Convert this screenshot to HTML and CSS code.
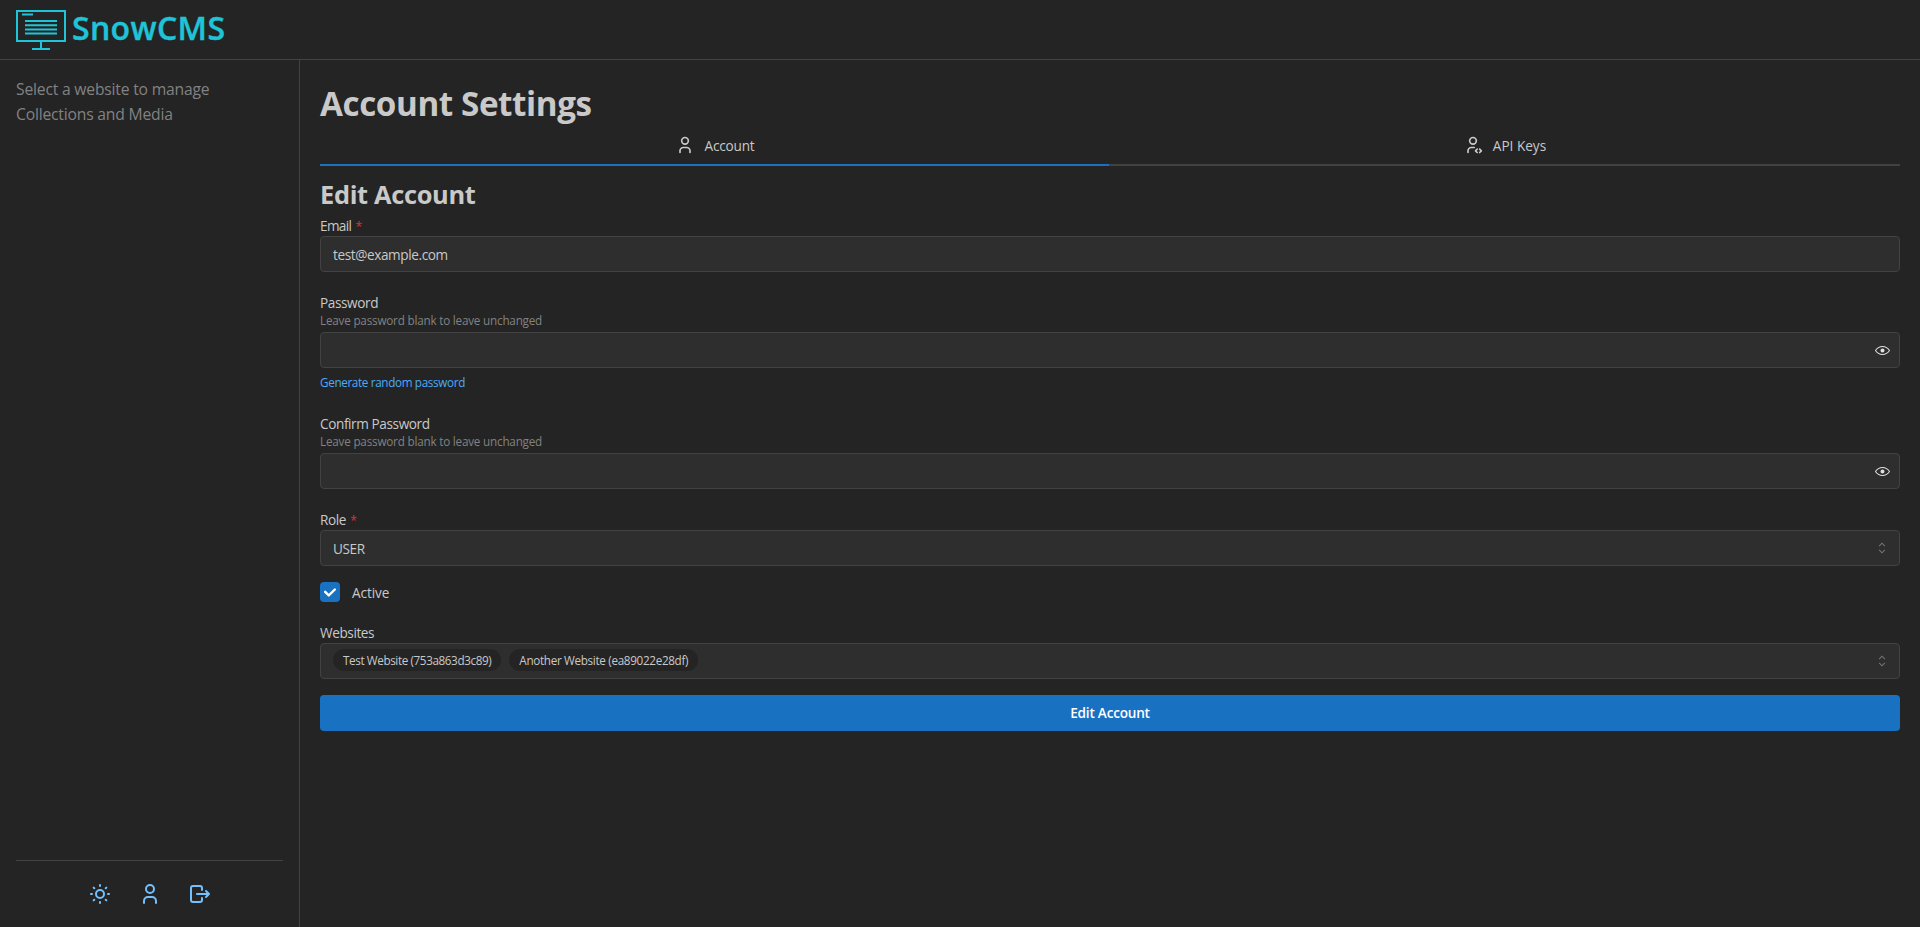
FILE: index.html
```
<!DOCTYPE html>
<html lang="en">
<head>
<meta charset="utf-8">
<title>SnowCMS</title>
<link rel="stylesheet" href="styles.css">
</head>
<body>
<header class="header">
  <svg class="logo-mark" width="50" height="41" viewBox="0 0 50 41" fill="none" stroke="currentColor">
    <rect x="1" y="1" width="48" height="30" stroke-width="2"/>
    <path d="M6 4.500h11M25 32v6M16 39h18M9 11h32M9 15.200h32M9 19.400h32M9 23.600h32" stroke-width="2"/>
  </svg>
  <span class="logo-text">SnowCMS</span>
</header>
<div class="shell">
  <aside class="sidebar">
    <p class="hint">Select a website to manage<br>Collections and Media</p>
    <nav class="actions">
      <svg class="icon" width="24" height="24" viewBox="0 0 24 24"><path d="M8 12a4 4 0 1 0 8 0a4 4 0 1 0 -8 0M3 12h1m8 -9v1m8 8h1m-9 8v1m-6.400 -15.400l.7 .7m12.100 -.7l-.7 .7m0 11.400l.7 .7m-12.100 -.7l-.7 .7"/></svg>
      <svg class="icon" width="24" height="24" viewBox="0 0 24 24"><path d="M8 7a4 4 0 1 0 8 0a4 4 0 0 0 -8 0M6 21v-2a4 4 0 0 1 4 -4h4a4 4 0 0 1 4 4v2"/></svg>
      <svg class="icon" width="24" height="24" viewBox="0 0 24 24"><path d="M14 8v-2a2 2 0 0 0 -2 -2h-7a2 2 0 0 0 -2 2v12a2 2 0 0 0 2 2h7a2 2 0 0 0 2 -2v-2M9 12h12l-3 -3M18 15l3 -3"/></svg>
    </nav>
  </aside>
  <main class="main">
    <h1 class="title">Account Settings</h1>
    <div class="tabs">
      <div class="tab tab-active">
        <svg class="icon" width="20" height="20" viewBox="0 0 24 24"><path d="M8 7a4 4 0 1 0 8 0a4 4 0 0 0 -8 0M6 21v-2a4 4 0 0 1 4 -4h4a4 4 0 0 1 4 4v2"/></svg>
        <span class="tab-text">Account</span>
      </div>
      <div class="tab">
        <svg class="icon" width="20" height="20" viewBox="0 0 24 24"><path d="M8 7a4 4 0 1 0 8 0a4 4 0 0 0 -8 0M6 21v-2a4 4 0 0 1 4 -4h3.500M20 21l2 -2l-2 -2M17 17l-2 2l2 2"/></svg>
        <span class="tab-text tab-text-wide">API Keys</span>
      </div>
    </div>
    <h2 class="subtitle">Edit Account</h2>
    <div class="field">
      <label class="label"><span class="email-label">Email</span> <span class="req">*</span></label>
      <div class="input"><span class="value">test@example.com</span></div>
    </div>
    <div class="field">
      <label class="label">Password</label>
      <p class="desc">Leave password blank to leave unchanged</p>
      <div class="input"><svg class="eye" width="15" height="15" viewBox="0 0 15 15"><path d="M7.500 11C4.800 11 2.520 9.620 1.090 7.500C2.520 5.380 4.800 4 7.500 4C10.200 4 12.480 5.380 13.910 7.500C12.480 9.620 10.200 11 7.500 11ZM7.500 3C4.310 3 1.650 4.710 .070 7.240C-.020 7.400 -.020 7.600 .070 7.760C1.650 10.290 4.310 12 7.500 12C10.690 12 13.350 10.290 14.930 7.760C15.020 7.600 15.020 7.400 14.930 7.240C13.350 4.710 10.690 3 7.500 3ZM7.500 9.500C8.600 9.500 9.500 8.600 9.500 7.500C9.500 6.400 8.600 5.500 7.500 5.500C6.400 5.500 5.500 6.400 5.500 7.500C5.500 8.600 6.400 9.500 7.500 9.500Z"/></svg></div>
      <a class="link">Generate random password</a>
    </div>
    <div class="field">
      <label class="label">Confirm Password</label>
      <p class="desc">Leave password blank to leave unchanged</p>
      <div class="input"><svg class="eye" width="15" height="15" viewBox="0 0 15 15"><path d="M7.500 11C4.800 11 2.520 9.620 1.090 7.500C2.520 5.380 4.800 4 7.500 4C10.200 4 12.480 5.380 13.910 7.500C12.480 9.620 10.200 11 7.500 11ZM7.500 3C4.310 3 1.650 4.710 .070 7.240C-.020 7.400 -.020 7.600 .070 7.760C1.650 10.290 4.310 12 7.500 12C10.690 12 13.350 10.290 14.930 7.760C15.020 7.600 15.020 7.400 14.930 7.240C13.350 4.710 10.690 3 7.500 3ZM7.500 9.500C8.600 9.500 9.500 8.600 9.500 7.500C9.500 6.400 8.600 5.500 7.500 5.500C6.400 5.500 5.500 6.400 5.500 7.500C5.500 8.600 6.400 9.500 7.500 9.500Z"/></svg></div>
    </div>
    <div class="field">
      <label class="label">Role <span class="req">*</span></label>
      <div class="input"><span class="value">USER</span><svg class="chevrons" width="16" height="16" viewBox="0 0 15 15"><path d="M4.800 5.700L7.500 3L10.200 5.700M4.800 9.300L7.500 12L10.200 9.300"/></svg></div>
    </div>
    <div class="check-row">
      <span class="checkbox"><svg width="12" height="9" viewBox="0 0 10 7"><path d="M4 4.586L1.707 2.293A1 1 0 1 0 .293 3.707l3 3a.997.997 0 0 0 1.414 0l5 -5A1 1 0 1 0 8.293 .293L4 4.586z"/></svg></span>
      <span class="check-text">Active</span>
    </div>
    <div class="field field-tight">
      <label class="label">Websites</label>
      <div class="input"><span class="pill pill-first">Test Website (753a863d3c89)</span><span class="pill">Another Website (ea89022e28df)</span><svg class="chevrons" width="16" height="16" viewBox="0 0 15 15"><path d="M4.800 5.700L7.500 3L10.200 5.700M4.800 9.300L7.500 12L10.200 9.300"/></svg></div>
    </div>
    <button class="button">Edit Account</button>
  </main>
</div>
</body>
</html>
```
FILE: styles.css
```
* { box-sizing: border-box; }
body {
  margin: 0;
  height: 100vh;
  display: flex;
  flex-direction: column;
  overflow: hidden;
  background: #242424;
  color: #c9c9c9;
  font-family: "Open Sans", "Noto Sans", sans-serif;
  font-size: 13.6px;
  letter-spacing: -0.4px;
  line-height: 1.55;
}
h1, h2, p { margin: 0; }
.header {
  height: 60px;
  flex: none;
  padding: 10px 16px 0;
  display: flex;
  gap: 6px;
  border-bottom: 1px solid #424242;
  color: #1fc4d8;
}
.logo-text {
  font-size: 32px;
  font-weight: 600;
  line-height: 36px;
  letter-spacing: 0.35px;
  -webkit-text-stroke: 0.4px currentColor;
}
.shell { flex: 1; display: flex; min-height: 0; }
.sidebar {
  width: 300px;
  padding: 17px 16px 16px;
  display: flex;
  flex-direction: column;
  justify-content: space-between;
  border-right: 1px solid #424242;
}
.hint { font-size: 15.7px; line-height: 25px; letter-spacing: -0.2px; color: #828282; }
.actions {
  height: 51px;
  padding-top: 21px;
  display: flex;
  justify-content: center;
  gap: 26px;
  border-top: 1px solid #424242;
  color: #74c0fc;
}
.icon { fill: none; stroke: currentColor; stroke-width: 2; stroke-linecap: round; stroke-linejoin: round; }
.main { flex: 1; padding: 22px 20px; }
.title { font-size: 33.2px; line-height: 44px; font-weight: 700; letter-spacing: -0.4px; }
.tabs { display: flex; height: 40px; }
.tab {
  flex: 1 1 50%;
  display: flex;
  align-items: center;
  justify-content: center;
  gap: 10px;
  border-bottom: 2px solid #424242;
}
.tab-active { flex: 0 0 789px; border-color: #1971c2; }
.tab-text { letter-spacing: -0.2px; padding-top: 1px; }
.tab-text-wide { letter-spacing: 0; }
.subtitle {
  height: 48px;
  padding-top: 10px;
  font-size: 25.4px;
  line-height: 36px;
  font-weight: 700;
  letter-spacing: -0.32px;
}
.field { margin-bottom: 19px; }
.field-tight { margin-bottom: 16px; }
.label { display: block; height: 22px; line-height: 23px; }
.email-label { letter-spacing: -0.65px; }
.req { margin-left: 1px; font-size: 12px; color: #e03131; }
.desc { height: 19px; font-size: 11.7px; line-height: 15px; letter-spacing: -0.2px; color: #828282; }
.input {
  height: 36px;
  padding: 0 12px;
  display: flex;
  align-items: center;
  gap: 8px;
  background: #2e2e2e;
  border: 1px solid #424242;
  border-radius: 4px;
}
.value { padding-top: 2px; }
.eye { margin-left: auto; margin-right: -3px; fill: #e0e0e0; }
.chevrons { margin-left: auto; margin-right: -3px; fill: none; stroke: #757575; }
.link { display: block; height: 25px; padding-top: 4px; font-size: 11.7px; line-height: 20px; letter-spacing: -0.34px; color: #4dabf7; }
.check-row { display: flex; align-items: center; gap: 12px; height: 20px; margin: -3px 0 19px; }
.check-text { padding-top: 2px; letter-spacing: -0.1px; }
.checkbox {
  width: 20px;
  height: 20px;
  display: flex;
  align-items: center;
  justify-content: center;
  background: #1971c2;
  border-radius: 4px;
  fill: #fff;
}
.pill {
  height: 22px;
  margin-top: -2px;
  padding: 0 10px;
  border-radius: 11px;
  background: #242424;
  font-size: 11.7px;
  line-height: 22px;
  letter-spacing: -0.32px;
}
.pill-first { letter-spacing: -0.39px; }
.button {
  display: block;
  width: 100%;
  height: 36px;
  padding-bottom: 2px;
  border: 0;
  border-radius: 4px;
  background: #1971c2;
  color: #fff;
  font: 600 13.6px "Open Sans", "Noto Sans", sans-serif;
  letter-spacing: -0.22px;
}
```
